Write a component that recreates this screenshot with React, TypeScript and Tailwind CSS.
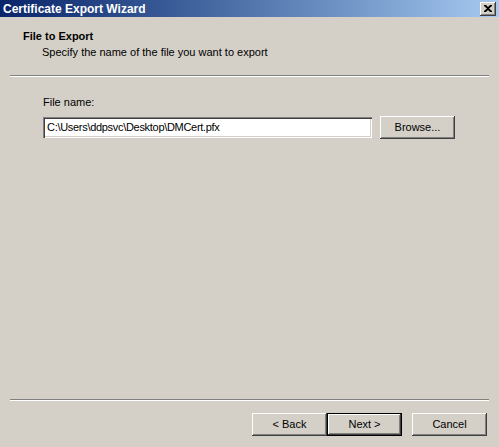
import React from "react";

const font = { fontFamily: "Tahoma, 'Liberation Sans', 'DejaVu Sans', sans-serif" };

function ClassicButton({ label, isDefault }: { label: string; isDefault?: boolean }) {
  const bevel =
    "shadow-[inset_-1px_-1px_#404040,inset_1px_1px_#ffffff,inset_-2px_-2px_#808080,inset_2px_2px_#d4d0c8]";
  if (isDefault) {
    return (
      <div className="h-[23px] w-[75px] border border-black">
        <button
          className={`flex h-full w-full items-center justify-center bg-[#d4d0c8] text-[11px] text-black ${bevel}`}
        >
          {label}
        </button>
      </div>
    );
  }
  return (
    <button
      className={`flex h-[23px] w-[75px] items-center justify-center bg-[#d4d0c8] text-[11px] text-black ${bevel}`}
    >
      {label}
    </button>
  );
}

function Separator() {
  return (
    <div className="mx-[10px]">
      <div className="h-px bg-[#808080]" />
      <div className="h-px bg-white" />
    </div>
  );
}

export default function App() {
  return (
    <div className="flex h-[447px] w-[499px] flex-col bg-[#d4d0c8]" style={font}>
      {/* Title bar */}
      <div className="flex h-[17px] items-center justify-between bg-gradient-to-r from-[#0a246a] to-[#a6caf0] pl-[3px] pr-[3px]">
        <span className="text-[12px] font-bold leading-none text-white">Certificate Export Wizard</span>
        <button className="flex h-[14px] w-[16px] items-center justify-center bg-[#d4d0c8] shadow-[inset_-1px_-1px_#404040,inset_1px_1px_#ffffff,inset_-2px_-2px_#808080]">
          <svg width="8" height="7" viewBox="0 0 8 7">
            <path d="M0 0h2l2 2 2-2h2v1L5 3.5 8 6v1H6L4 5 2 7H0V6l3-2.5L0 1z" fill="#000" />
          </svg>
        </button>
      </div>

      {/* Header */}
      <div className="pl-[23px] pt-[13px]">
        <div className="text-[11px] font-bold leading-[13px] text-black">File to Export</div>
        <div className="mt-[3px] pl-[19px] text-[11px] leading-[13px] text-black">
          Specify the name of the file you want to export
        </div>
      </div>

      <div className="mt-[16px]">
        <Separator />
      </div>

      {/* Body */}
      <div className="flex-1 pl-[43px] pt-[19px]">
        <div className="text-[11px] leading-[13px] text-black">File name:</div>
        <div className="mt-[7px] flex items-center gap-[8px]">
          <div className="flex h-[21px] w-[329px] items-center bg-white px-[4px] text-[11px] tracking-[-0.3px] text-black shadow-[inset_1px_1px_#808080,inset_2px_2px_#404040,inset_-1px_-1px_#ffffff,inset_-2px_-2px_#d4d0c8]">
            C:\Users\ddpsvc\Desktop\DMCert.pfx
          </div>
          <ClassicButton label="Browse..." />
        </div>
      </div>

      <Separator />

      {/* Footer buttons */}
      <div className="flex justify-end pb-[11px] pr-[12px] pt-[12px]">
        <ClassicButton label="< Back" />
        <ClassicButton label="Next >" isDefault />
        <div className="ml-[10px]">
          <ClassicButton label="Cancel" />
        </div>
      </div>
    </div>
  );
}
